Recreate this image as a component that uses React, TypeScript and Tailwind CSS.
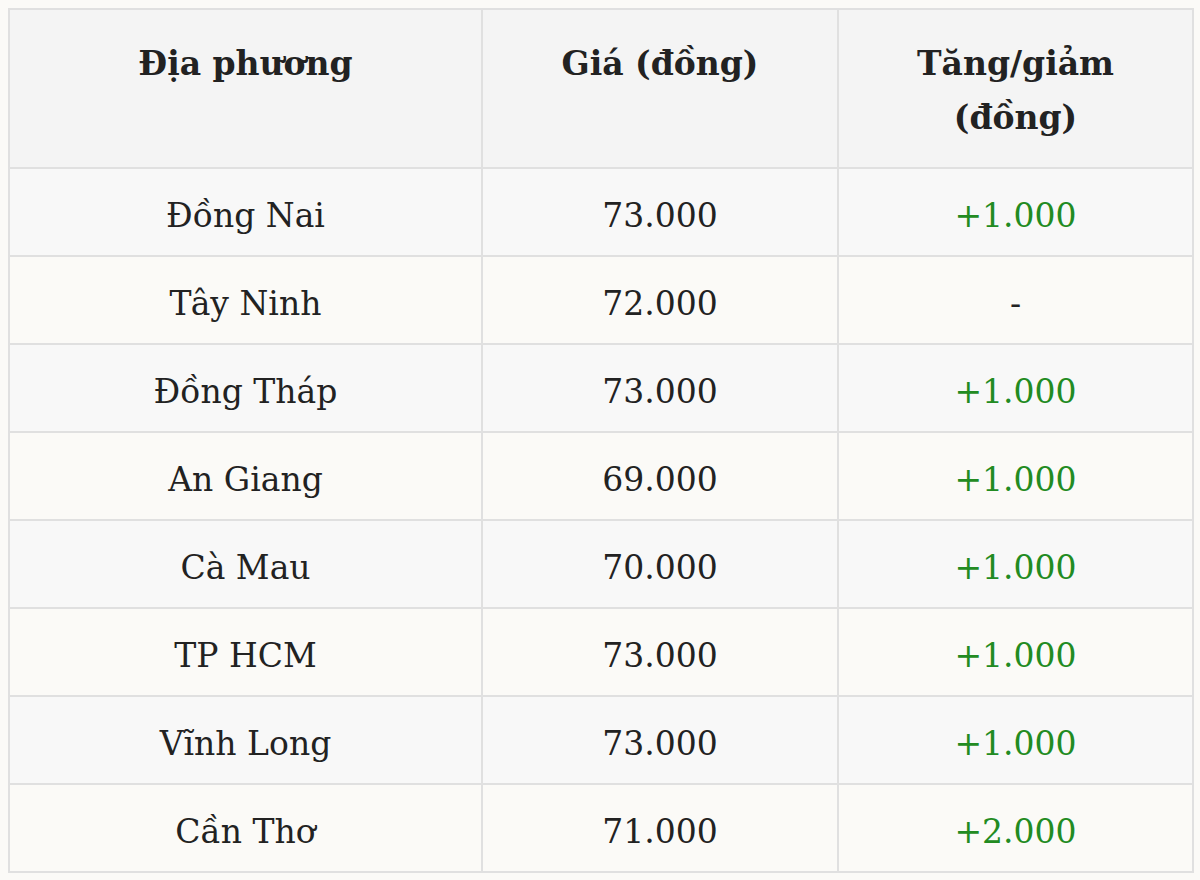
import React from 'react';

interface PriceRow {
  place: string;
  price: string;
  change: string;
}

const rows: PriceRow[] = [
  { place: 'Đồng Nai', price: '73.000', change: '+1.000' },
  { place: 'Tây Ninh', price: '72.000', change: '-' },
  { place: 'Đồng Tháp', price: '73.000', change: '+1.000' },
  { place: 'An Giang', price: '69.000', change: '+1.000' },
  { place: 'Cà Mau', price: '70.000', change: '+1.000' },
  { place: 'TP HCM', price: '73.000', change: '+1.000' },
  { place: 'Vĩnh Long', price: '73.000', change: '+1.000' },
  { place: 'Cần Thơ', price: '71.000', change: '+2.000' },
];

export default function App() {
  return (
    <div
      className="min-h-screen bg-[#fbfaf7] p-2 text-[#222]"
      style={{ fontFamily: '"DejaVu Serif", serif' }}
    >
      <table className="w-[1184px] table-fixed border-collapse border-2 border-[#e0e0e0] text-[33px] leading-[54px]">
        <colgroup>
          <col className="w-[473px]" />
          <col className="w-[356px]" />
          <col className="w-[355px]" />
        </colgroup>
        <thead>
          <tr className="h-[158px] bg-[#f4f4f4]">
            <th className="border-2 border-[#e0e0e0] px-4 pt-[27px] pb-[22px] align-top font-bold">
              Địa phương
            </th>
            <th className="border-2 border-[#e0e0e0] px-4 pt-[27px] pb-[22px] align-top font-bold">
              Giá (đồng)
            </th>
            <th className="border-2 border-[#e0e0e0] px-16 pt-[27px] pb-[22px] align-top font-bold">
              Tăng/giảm (đồng)
            </th>
          </tr>
        </thead>
        <tbody>
          {rows.map((r, i) => (
            <tr
              key={r.place}
              className={`h-[88px] ${i % 2 === 0 ? 'bg-[#f8f8f8]' : 'bg-[#fbfaf7]'}`}
            >
              <td className="border-2 border-[#e0e0e0] px-4 pt-[7px] text-center align-middle">
                {r.place}
              </td>
              <td className="border-2 border-[#e0e0e0] px-4 pt-[7px] text-center align-middle">
                {r.price}
              </td>
              <td
                className={`border-2 border-[#e0e0e0] px-4 pt-[7px] text-center align-middle ${
                  r.change === '-' ? 'text-[#222]' : 'text-[#228b22]'
                }`}
              >
                {r.change}
              </td>
            </tr>
          ))}
        </tbody>
      </table>
    </div>
  );
}
